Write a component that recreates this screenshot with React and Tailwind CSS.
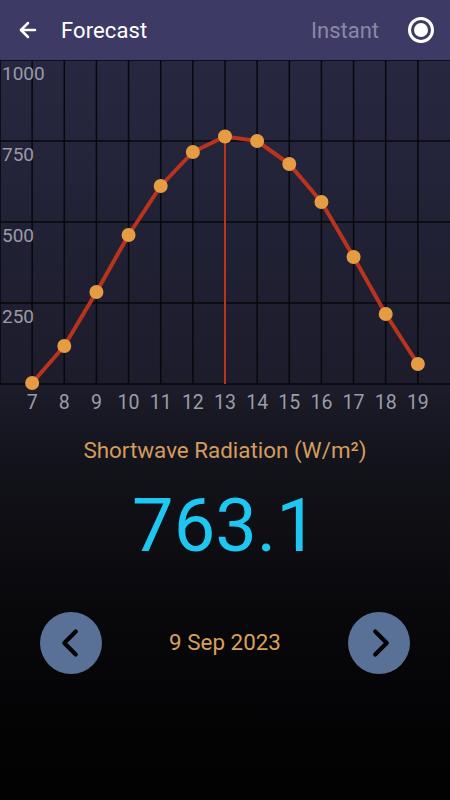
import { ArrowLeft, ChevronLeft, ChevronRight } from "lucide-react";

const values = [
  { h: 7, y: 383 },
  { h: 8, y: 346 },
  { h: 9, y: 292 },
  { h: 10, y: 235 },
  { h: 11, y: 186 },
  { h: 12, y: 152 },
  { h: 13, y: 136.5 },
  { h: 14, y: 141 },
  { h: 15, y: 164 },
  { h: 16, y: 202 },
  { h: 17, y: 257 },
  { h: 18, y: 314 },
  { h: 19, y: 364 },
];

const colX = (i) => (i * 450) / 14;

function Chart() {
  // chart svg starts at page y=60
  const pts = values.map((v) => [colX(v.h - 6), v.y - 60]);
  const rows = [0, 81, 162, 243, 324];
  const yLabels = ["1000", "750", "500", "250"];

  return (
    <svg width="450" height="360" className="block" style={{ fontFamily: "Roboto, sans-serif" }}>
      {/* grid */}
      {Array.from({ length: 14 }).map((_, i) => (
        <line key={"v" + i} x1={colX(i)} y1="0" x2={colX(i)} y2="324" stroke="#07070c" strokeWidth="1.5" />
      ))}
      {rows.map((y) => (
        <line key={"h" + y} x1="0" y1={y} x2="450" y2={y} stroke="#07070c" strokeWidth="1.5" />
      ))}

      {yLabels.map((t, i) => (
        <text key={t} x="2" y={rows[i] + 20} fontSize="19" fill="#9b9aa6">
          {t}
        </text>
      ))}

      {/* selected hour */}
      <line x1={colX(7)} y1={pts[6][1]} x2={colX(7)} y2="324" stroke="#b8341c" strokeWidth="2" />

      <polyline
        points={pts.map((p) => p.join(",")).join(" ")}
        fill="none"
        stroke="#b8341c"
        strokeWidth="4"
        strokeLinejoin="round"
      />
      {pts.map((p, i) => (
        <circle key={i} cx={p[0]} cy={p[1]} r="7" fill="#e59c43" />
      ))}

      {values.map((v) => (
        <text key={v.h} x={colX(v.h - 6)} y="349" fontSize="19.5" fill="#9d9ca6" textAnchor="middle">
          {v.h}
        </text>
      ))}
    </svg>
  );
}

function App() {
  return (
    <div
      className="w-[450px] h-[800px] overflow-hidden flex flex-col bg-[linear-gradient(180deg,#282843_0px,#272741_60px,#1c1c2b_384px,#121219_470px,#08080b_620px,#030304_740px,#020203_800px)]"
      style={{ fontFamily: "Roboto, 'Noto Sans', sans-serif" }}
    >
      {/* Header */}
      <div className="h-[60px] shrink-0 bg-[#3d3a66] flex items-center pl-[16px] pr-[16px]">
        <ArrowLeft size={24} strokeWidth={2.5} className="text-white" />
        <div className="ml-[21px] text-white text-[22px] tracking-[0.1px]">Forecast</div>
        <div className="ml-auto text-[#8b88a3] text-[22px]">Instant</div>
        <div className="ml-[29px] w-[26px] h-[26px] rounded-full border-[3px] border-white flex items-center justify-center">
          <div className="w-[14px] h-[14px] rounded-full bg-white" />
        </div>
      </div>

      <Chart />

      <div className="text-center text-[#d49c5e] text-[22.4px] mt-[16px] leading-[28px]">
        Shortwave Radiation (W/m²)
      </div>

      <div className="text-center text-[#1ec6f2] text-[74px] leading-[80px] mt-[22px]">763.1</div>

      <div className="flex items-center justify-between px-[40px] mt-[46px]">
        <button className="w-[62px] h-[62px] rounded-full bg-[#5a7197] flex items-center justify-center">
          <ChevronLeft size={46} strokeWidth={2.2} className="text-black -ml-[3px]" />
        </button>
        <div className="text-[#d9a05c] text-[22.4px]">9 Sep 2023</div>
        <button className="w-[62px] h-[62px] rounded-full bg-[#5a7197] flex items-center justify-center">
          <ChevronRight size={46} strokeWidth={2.2} className="text-black ml-[3px]" />
        </button>
      </div>
    </div>
  );
}

export default App;
